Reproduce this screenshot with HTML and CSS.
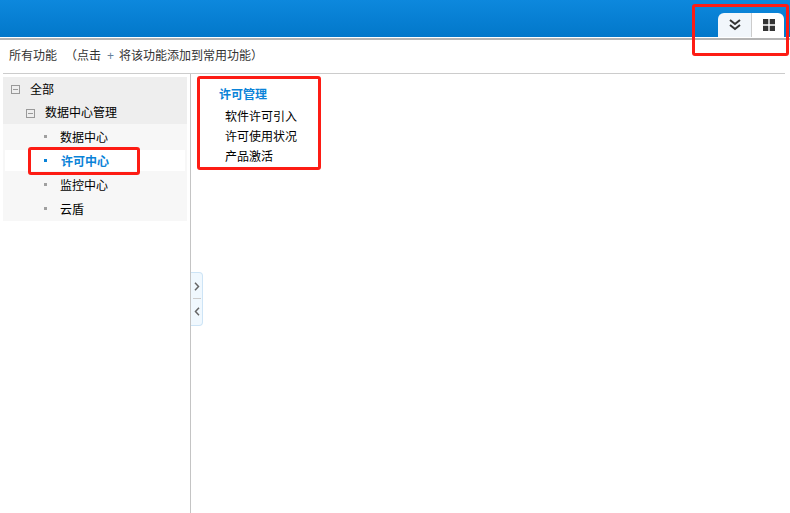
FILE: index.html
```html
<!DOCTYPE html>
<html lang="zh-CN">
<head>
<meta charset="utf-8">
<title>所有功能</title>
<link rel="stylesheet" href="styles.css">
</head>
<body>
<header class="topbar">
  <div class="tabs">
    <div class="tab tab-expand">
      <svg width="14" height="14" viewBox="0 0 14 14"><path d="M2 2l5 4 5-4M2 7l5 4 5-4" fill="none" stroke="#333" stroke-width="2"/></svg>
    </div>
    <div class="tab tab-grid">
      <svg width="12" height="12" viewBox="0 0 12 12"><path d="M0 0h5.300v5.300H0zM6.700 0H12v5.300H6.700zM0 6.700h5.300V12H0zM6.700 6.700H12V12H6.700z" fill="#333"/></svg>
    </div>
  </div>
</header>
<div class="hint"><span class="hint-title">所有功能</span><span class="hint-note">（点击<span class="plus">+</span>将该功能添加到常用功能）</span></div>
<main class="body">
  <aside class="tree">
    <div class="row row-root"><span class="minus"></span><span>全部</span></div>
    <div class="row row-group"><span class="minus"></span><span>数据中心管理</span></div>
    <ul class="leaves">
      <li class="leaf"><span class="dot"></span>数据中心</li>
      <li class="leaf leaf-active"><span class="dot"></span>许可中心</li>
      <li class="leaf leaf-monitor"><span class="dot"></span>监控中心</li>
      <li class="leaf"><span class="dot"></span>云盾</li>
    </ul>
  </aside>
  <div class="splitter">
    <div class="handle">
      <svg class="arrow" width="6" height="9" viewBox="0 0 6 9"><path d="M1 .8 4.500 4.500 1 8.200" fill="none" stroke="#666" stroke-width="1.500"/></svg>
      <span class="handle-line"></span>
      <svg class="arrow" width="6" height="9" viewBox="0 0 6 9"><path d="M5 .8 1.500 4.500 5 8.200" fill="none" stroke="#666" stroke-width="1.500"/></svg>
    </div>
  </div>
  <section class="content">
    <h2 class="content-title">许可管理</h2>
    <ul class="links">
      <li>软件许可引入</li>
      <li>许可使用状况</li>
      <li>产品激活</li>
    </ul>
  </section>
</main>
<div class="mark mark-top"></div>
<div class="mark mark-tree"></div>
<div class="mark mark-content"></div>
</body>
</html>
```

FILE: styles.css
```css
* { box-sizing: border-box; }
html, body { margin: 0; padding: 0; }
body {
  width: 790px;
  height: 513px;
  overflow: hidden;
  position: relative;
  background: #fff;
  color: #000;
  font: 12px/20px "Liberation Sans", "Noto Sans CJK SC", sans-serif;
}
ul { list-style: none; margin: 0; padding: 0; }

.topbar {
  height: 40px;
  background: linear-gradient(#0d88dd, #0277c9);
  border-bottom: 2px solid #b4b4b4;
  box-shadow: inset 0 -1px 0 #fff;
  display: flex;
  justify-content: flex-end;
  align-items: flex-end;
  padding-right: 6px;
}
.tabs { display: flex; height: 24px; margin-bottom: 1px; }
.tab { display: flex; align-items: center; justify-content: center; height: 24px; }
.tab-expand { width: 34px; background: #f1f6fb; border-radius: 6px 0 0 0; border-right: 1px solid #ccc; }
.tab-grid { width: 32px; padding-left: 1px; background: #fff; border-radius: 0 6px 0 0; }

.hint {
  height: 34px;
  margin: 0 5px 0 3px;
  padding: 6px 0 0 6px;
  border-bottom: 1px solid #ccc;
  color: #333;
  display: flex;
}
.hint-title { width: 56px; }
.plus { margin: 0 5px 0 6px; color: #667f99; }

.body { display: flex; height: 439px; }
.tree { width: 190px; padding: 3px 3px 0 3px; }
.row { background: #eee; display: flex; align-items: center; padding-top: 2px; }
.row-root { height: 23px; padding-left: 8px; gap: 10px; }
.row-group { height: 24px; padding-left: 23px; gap: 10px; }
.minus { width: 9px; height: 9px; border: 1px solid #999; position: relative; flex: none; }
.minus::after { content: ""; position: absolute; left: 1px; right: 1px; top: 3px; height: 1px; background: #999; }

.leaves { background: #f7f7f7; height: 97px; padding: 2px 2px 0; }
.leaf { height: 24px; display: flex; align-items: center; padding-left: 55px; position: relative; }
.dot { position: absolute; left: 39px; top: 9px; width: 3px; height: 3px; background: #a0a0a0; }
.leaf-active { height: 21px; padding: 2px 0 0 56px; background: #fff; color: #0a83d8; font-weight: bold; }
.leaf-active .dot { background: #0a83d8; }
.leaf-monitor { margin-top: 3px; }

.splitter { width: 1px; background: #c4c4c4; position: relative; flex: none; }
.handle {
  position: absolute;
  left: 1px;
  top: 198px;
  width: 12px;
  height: 54px;
  padding-top: 9px;
  background: #f0f8fe;
  border: 1px solid #cde4f6;
  border-left: 0;
  border-radius: 0 4px 4px 0;
  display: flex;
  flex-direction: column;
  align-items: center;
}
.arrow { display: block; flex: none; }
.handle-line { width: 8px; height: 1px; margin: 7px 0 8px; background: #ccc; flex: none; }

.content { padding: 11px 0 0 28px; }
.content-title { margin: 0 0 2px; font-size: 12px; line-height: 20px; color: #0a83d8; font-weight: bold; }
.links { padding-left: 6px; }
.links li { height: 20px; }

.mark { position: absolute; border: 3px solid #fd1c14; border-radius: 3px; }
.mark-top { left: 692px; top: 4px; width: 97px; height: 52px; }
.mark-tree { left: 28px; top: 147px; width: 112px; height: 28px; }
.mark-content { left: 197px; top: 76px; width: 124px; height: 94px; }
```
